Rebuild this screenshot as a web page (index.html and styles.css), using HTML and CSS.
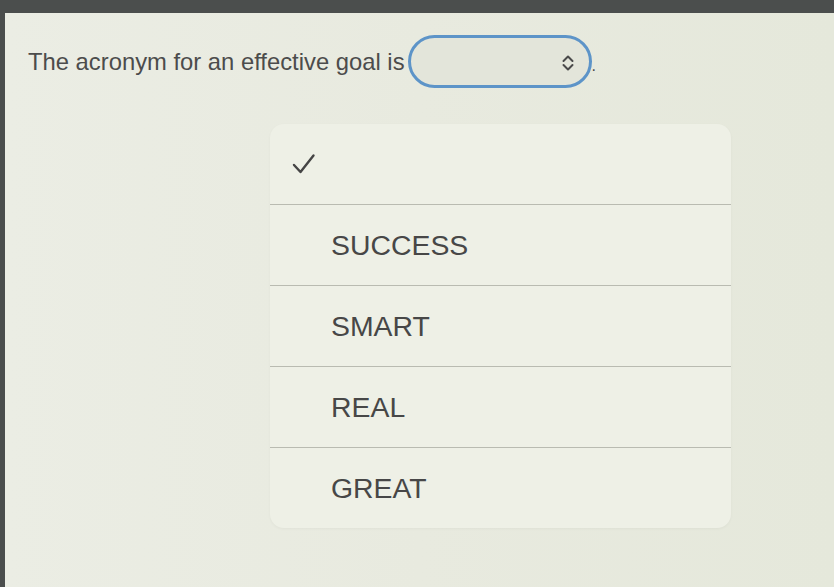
FILE: index.html
```html
<!DOCTYPE html>
<html>
<head>
<meta charset="utf-8">
<link rel="stylesheet" href="styles.css">
</head>
<body>
<div class="screen">
  <div class="question">
    <span class="qtext">The acronym for an effective goal is</span>
    <span class="select">
      <svg class="chev" width="14" height="18" viewBox="0 0 14 18"><path d="M2.5 7 L7 2.5 L11.5 7 M2.5 11 L7 15.5 L11.5 11" fill="none" stroke="#4a4a4a" stroke-width="2" stroke-linecap="round" stroke-linejoin="round"/></svg>
    </span>
    <span class="dot">.</span>
  </div>
  <div class="menu">
    <div class="row check-row">
      <svg width="24" height="22" viewBox="0 0 24 22"><path d="M2 12 L8.5 19 L21.5 2.5" fill="none" stroke="#454545" stroke-width="2.4" stroke-linecap="round" stroke-linejoin="round"/></svg>
    </div>
    <div class="row"><span>SUCCESS</span></div>
    <div class="row"><span>SMART</span></div>
    <div class="row"><span>REAL</span></div>
    <div class="row"><span>GREAT</span></div>
  </div>
</div>
</body>
</html>
```
FILE: styles.css
```css
html, body {
  margin: 0;
  padding: 0;
  height: 100%;
}
body {
  background: #4b4e4d;
  font-family: "Liberation Sans", Arial, sans-serif;
  overflow: hidden;
}
.screen {
  box-sizing: border-box;
  margin-top: 13px;
  margin-left: 5px;
  height: calc(100% - 13px);
  background: linear-gradient(90deg, #ebede4 0%, #e8eadf 50%, #e5e8db 100%);
  padding-top: 22px;
}
.question {
  display: flex;
  align-items: center;
  padding-left: 23px;
  height: 53px;
}
.qtext {
  font-size: 23.8px;
  color: #4c4c4c;
  margin-top: 1px;
}
.select {
  box-sizing: border-box;
  width: 184px;
  height: 53px;
  margin-left: 3px;
  border: 3.5px solid #5d94c8;
  border-radius: 27px;
  background: #e3e5da;
  display: flex;
  align-items: center;
  justify-content: flex-end;
  padding-right: 14px;
}
.chev {
  display: block;
  margin-top: 2px;
}
.dot {
  font-size: 16px;
  color: #4c4c4c;
  margin-top: 8px;
}
.menu {
  margin-top: 36px;
  margin-left: 265px;
  width: 461px;
  background: #eef0e6;
  border-radius: 14px;
  box-shadow: 0 1px 3px rgba(0,0,0,0.04);
  overflow: hidden;
}
.row {
  box-sizing: border-box;
  height: 81px;
  display: flex;
  align-items: center;
  padding-left: 61px;
  border-top: 1px solid #b9bbb1;
  font-size: 28.4px;
  color: #474747;
}
.row span {
  margin-top: 1px;
}
.check-row {
  border-top: none;
  height: 80px;
  padding-left: 22px;
}
```
